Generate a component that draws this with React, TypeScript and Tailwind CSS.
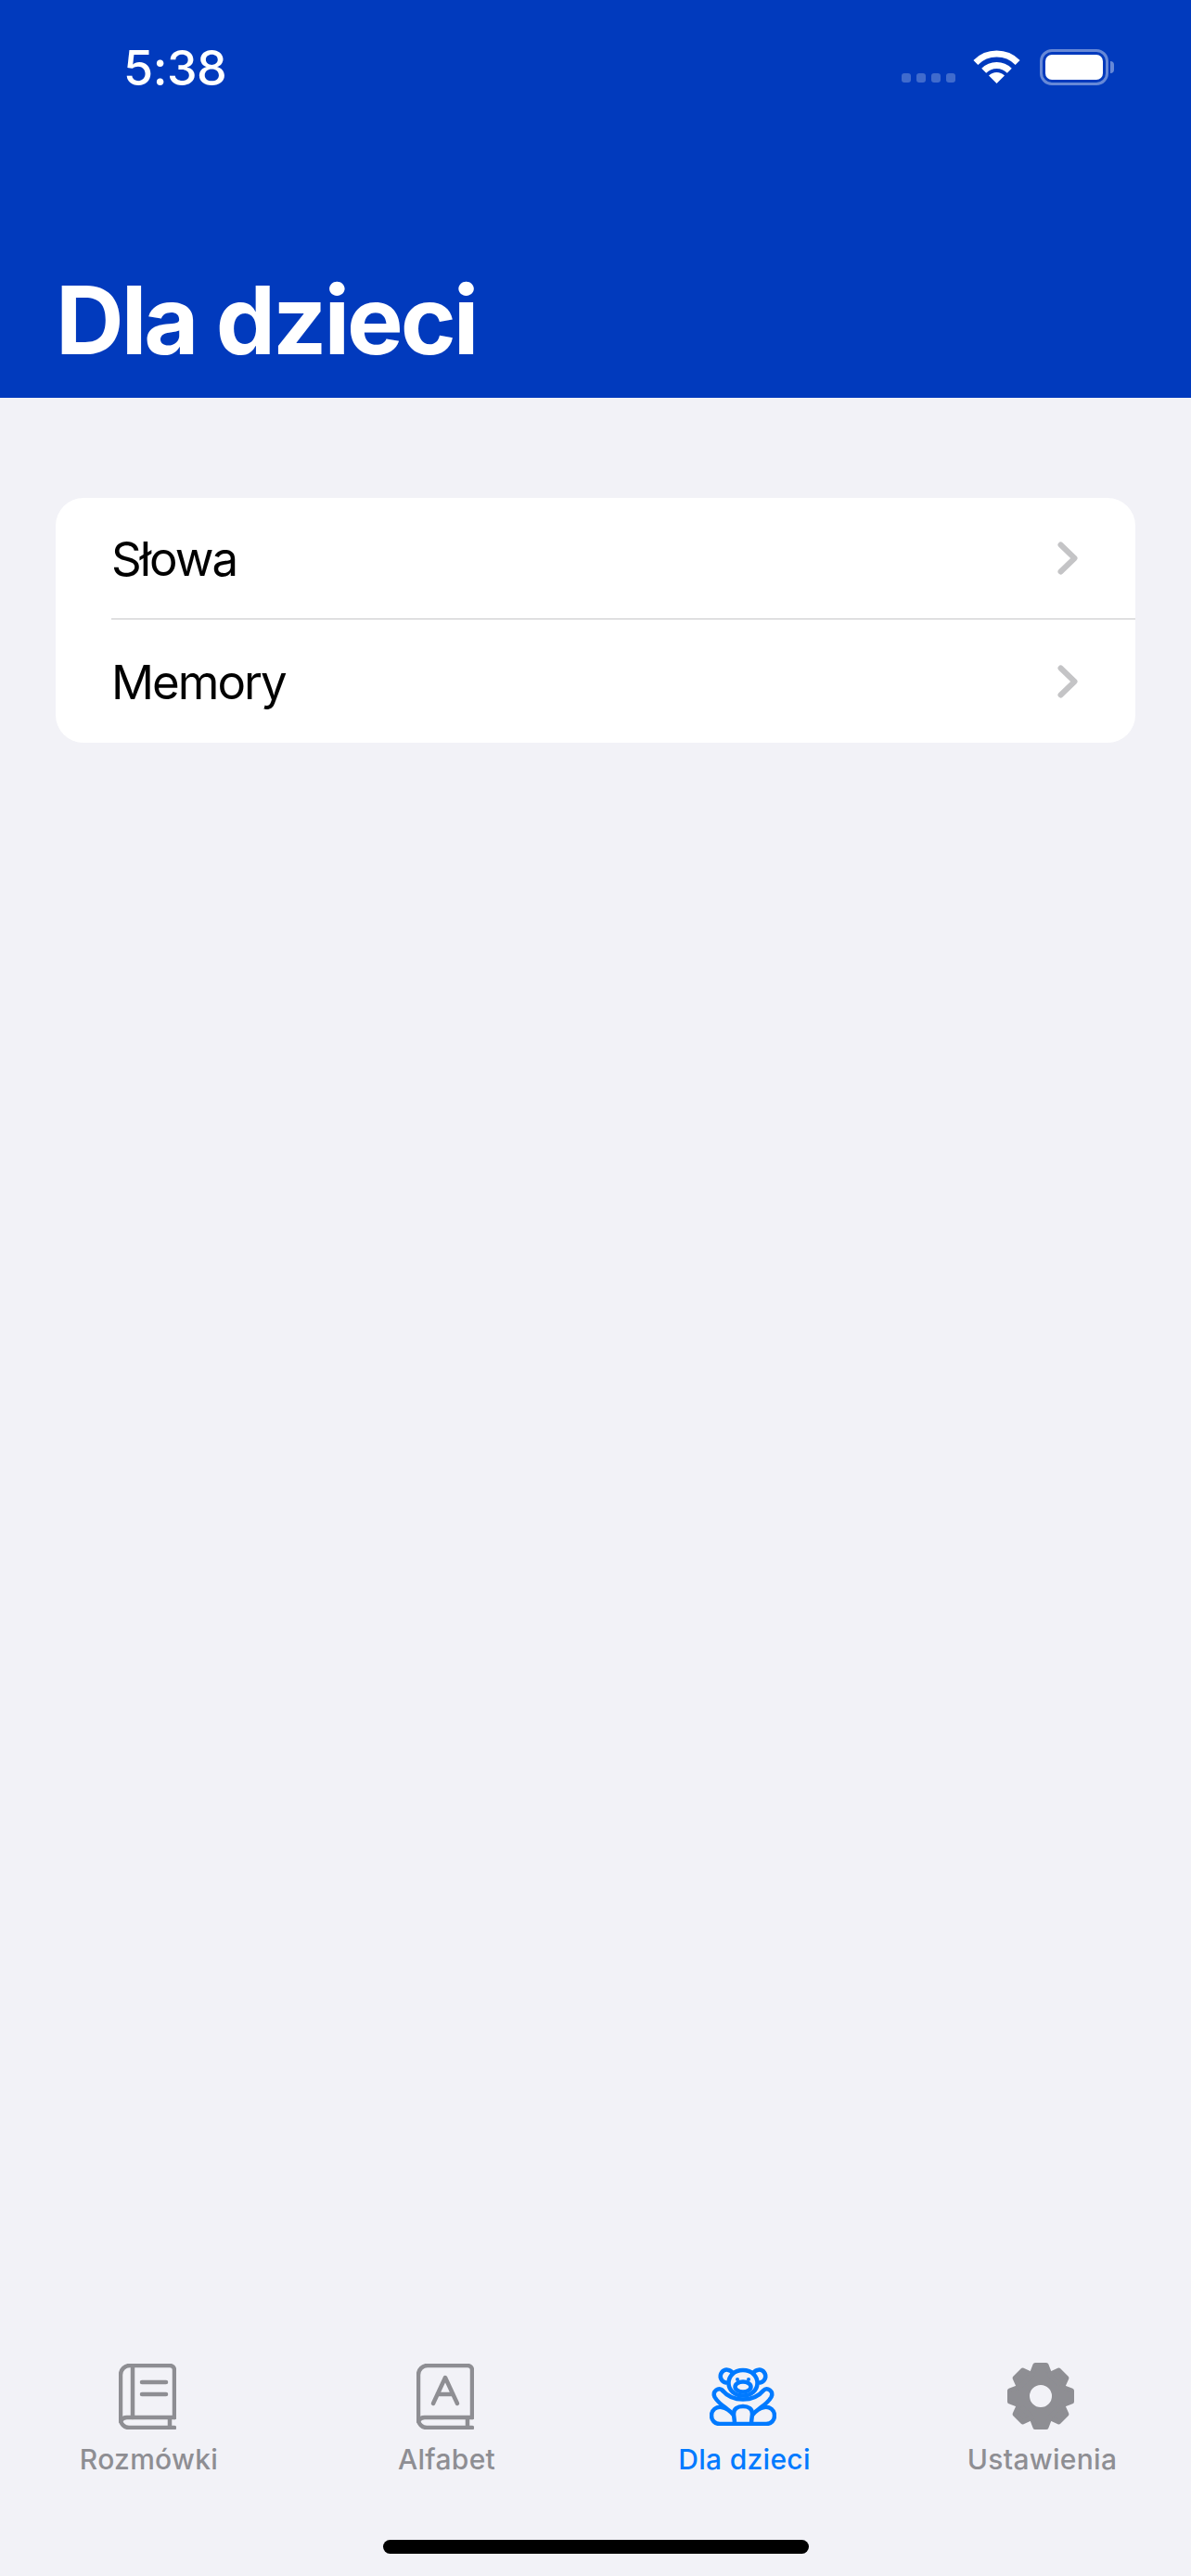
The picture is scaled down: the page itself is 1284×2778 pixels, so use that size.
const sans = "font-['Inter','Liberation_Sans',sans-serif]";

function BookShell({ children }: { children?: React.ReactNode }) {
  return (
    <svg width="62" height="71" viewBox="0 0 62 71" fill="none" stroke="#8e8e93" strokeWidth="4.500" strokeLinecap="round" strokeLinejoin="round">
      <path d="M60 58V7a5 5 0 0 0-5-5H12A10 10 0 0 0 2 12V60a9 9 0 0 0 9 9H60" />
      <path d="M2 62a8 8 0 0 1 8-4H60M55 58V69" />
      {children}
    </svg>
  );
}

function BearIcon() {
  return (
    <svg width="72" height="64" viewBox="0 0 72 64" fill="none" stroke="#007aff" strokeWidth="4.500" strokeLinecap="round" strokeLinejoin="round">
      <path d="M25 7.500a7 7 0 1 0-7.500 10M47 7.500a7 7 0 1 1 7.500 10" />
      <path d="M36 4C26 4 20.500 11 20.500 18c0 8 7 13.500 15.500 13.500S51.500 26 51.500 18C51.500 11 46 4 36 4Z" />
      <ellipse cx="36" cy="22" rx="8.500" ry="5.500" />
      <circle cx="30" cy="14" r="2" fill="#007aff" stroke="none" />
      <circle cx="42" cy="14" r="2" fill="#007aff" stroke="none" />
      <path d="M14 26c5 6 12 9.500 22 9.500S53 32 58 26c4-4.500 11.500 1 8.500 7C64.500 36.500 60 41 54 45" />
      <path d="M14 26C10 21.500 2.500 27 5.500 33 7.500 36.500 12 41 18 45" />
      <path d="M27 62H11C5.500 62 2 58 2 53c0-6 5-10 11-9 6 1 10 5 12.500 8" />
      <path d="M45 62H61C66.500 62 70 58 70 53c0-6-5-10-11-9-6 1-10 5-12.500 8" />
      <path d="M27 62C27 57 26 54 26 51c0-5 4-8 10-8s10 3 10 8c0 3-1 6-1 11Z" />
    </svg>
  );
}

function GearIcon() {
  const angles = [0, 45, 90, 135, 180, 225, 270, 315];
  return (
    <svg width="72" height="72" viewBox="-36 -36 72 72">
      <circle r="19.500" fill="none" stroke="#8e8e93" strokeWidth="15" />
      {angles.map((a) => (
        <path key={a} d="M-10-23-6-33.500H6L10-23Z" transform={`rotate(${a})`} fill="#8e8e93" stroke="#8e8e93" strokeWidth="5" strokeLinejoin="round" />
      ))}
    </svg>
  );
}

function Chevron() {
  return (
    <svg width="22" height="36" viewBox="0 0 22 36" fill="none" stroke="#c4c4c6" strokeWidth="6" strokeLinecap="round" strokeLinejoin="round">
      <path d="M3.500 3.500 18.500 18 3.500 32.500" />
    </svg>
  );
}

const tabs = [
  {
    label: "Rozmówki",
    icon: (
      <BookShell>
        <path d="M15 2V58M25 20H51M25 33H51" />
      </BookShell>
    ),
  },
  {
    label: "Alfabet",
    icon: (
      <BookShell>
        <path d="M18 43 31 15 44 43M22.500 33H39.500" />
      </BookShell>
    ),
  },
  { label: "Dla dzieci", icon: <BearIcon />, active: true },
  { label: "Ustawienia", icon: <GearIcon /> },
];

export default function App() {
  return (
    <div className={`${sans} flex h-[2778px] w-[1284px] flex-col overflow-hidden bg-[#f2f2f7]`}>
      <header className="flex h-[429px] flex-col bg-[#013abd] text-white">
        <div className="flex h-[144px] items-center pl-[133px] pr-[83px]">
          <span className="mt-[4px] text-[52px] font-medium leading-none tracking-[-0.5px]">5:38</span>
          <div className="ml-auto flex items-center">
            <div className="mt-[24px] mr-[19px] flex gap-[6px]">
              <span className="h-[10px] w-[10px] rounded-[3px] bg-white/25" />
              <span className="h-[10px] w-[10px] rounded-[3px] bg-white/25" />
              <span className="h-[10px] w-[10px] rounded-[3px] bg-white/25" />
              <span className="h-[10px] w-[10px] rounded-[3px] bg-white/25" />
            </div>
            <svg width="51" height="37" viewBox="0 0 51 37" fill="none" stroke="#fff" strokeWidth="7" className="mr-[21px]">
              <path d="M2.900 13.400A32 32 0 0 1 48.100 13.400" />
              <path d="M11.700 22.200A19.500 19.500 0 0 1 39.300 22.200" />
              <path d="M25.500 36 17 27.500A12 12 0 0 1 34 27.500Z" fill="#fff" stroke="none" />
            </svg>
            <div className="flex items-center">
              <div className="flex h-[39px] w-[74px] rounded-[13px] border-[3px] border-white/40 p-[3px]">
                <div className="flex-1 rounded-[7px] bg-white" />
              </div>
              <span className="ml-[2px] h-[13px] w-[4px] rounded-r-[4px] bg-white/40" />
            </div>
          </div>
        </div>
        <h1 className="mt-[151px] pl-[60px] text-[102px] font-bold leading-[100px] tracking-[-3px]">Dla dzieci</h1>
      </header>

      <main className="flex-1 px-[60px] pt-[108px]">
        <div className="overflow-hidden rounded-[30px] bg-white">
          {["Słowa", "Memory"].map((name, i) => (
            <div key={name} className="pl-[60px]">
              {i > 0 && <div className="h-[1px] bg-[#c6c6c8]" />}
              <div className={`flex items-center justify-between pr-[62px] ${i > 0 ? "h-[133px]" : "h-[130px]"}`}>
                <span className="mt-[1px] text-[51px] leading-none tracking-[-2px] text-black">{name}</span>
                <Chevron />
              </div>
            </div>
          ))}
        </div>
      </main>

      <nav className="flex">
        {tabs.map((t) => (
          <div key={t.label} className={`flex flex-1 flex-col items-center ${t.active ? "text-[#007aff]" : "text-[#8e8e93]"}`}>
            <div className="flex h-[72px] items-center justify-center pr-[3px]">{t.icon}</div>
            <span className="mt-[14px] text-[30px] font-medium leading-[36px] tracking-[0.3px]">{t.label}</span>
          </div>
        ))}
      </nav>

      <div className="flex h-[108px] justify-center pt-[69px]">
        <div className="h-[15px] w-[459px] rounded-full bg-black" />
      </div>
    </div>
  );
}
